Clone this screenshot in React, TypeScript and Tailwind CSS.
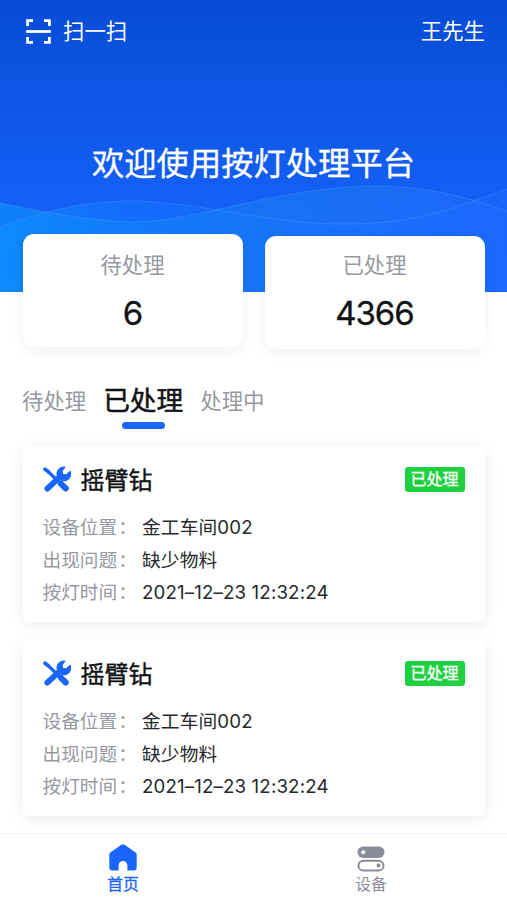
const stats = [
  { label: '待处理', value: '6', offset: 'mt-0', labelOffset: 'mt-[15px]' },
  { label: '已处理', value: '4366', offset: 'mt-0.5', labelOffset: 'mt-[13px]' },
];

const records = [
  { id: 1, name: '摇臂钻', status: '已处理', place: '金工车间002', problem: '缺少物料', time: '2021–12–23 12:32:24' },
  { id: 2, name: '摇臂钻', status: '已处理', place: '金工车间002', problem: '缺少物料', time: '2021–12–23 12:32:24' },
];

function ScanIcon() {
  return (
    <svg width="25" height="25" viewBox="0 0 25 25" fill="none" stroke="#fff" strokeWidth="2.8">
      <path d="M1.6 7V1.600H7M18 1.600h5.400V7M23.400 18v5.400H18M7 23.400H1.600V18" />
      <path d="M.2 12.500h24.600" />
    </svg>
  );
}

function ToolsIcon() {
  return (
    <svg width="28" height="27" viewBox="0 0 28 27" fill="none" stroke="#1a66fb" strokeLinecap="round">
      <path d="M2 3.200 5.400 5.800" strokeWidth="3.600" />
      <path d="M5 5.500 17 17" strokeWidth="3.200" />
      <path d="M17.800 17.600l5 4.900" strokeWidth="6" />
      <path d="M4.300 22.700 17 10.800" strokeWidth="5.800" />
      <path d="M22.800.8a7.200 7.200 0 0 0-8.300 10.500 7.200 7.200 0 0 0 12.900-6.700l-4.300 3.700-2.900-.4-.5-3z" fill="#1a66fb" stroke="none" />
    </svg>
  );
}

function HomeIcon() {
  return (
    <svg width="28" height="27" viewBox="0 0 28 27" fill="#1a66fb">
      <path d="M12.400.8a2.600 2.600 0 0 1 3.200 0L26.300 8.200c.9.7 1.400 1.500 1.400 2.600V23.600a3 3 0 0 1-3 3H18.400V21.300a4.400 4.400 0 0 0-8.800 0V26.600H3.300a3 3 0 0 1-3-3V10.800c0-1.100.5-1.900 1.400-2.600z" />
    </svg>
  );
}

function DeviceIcon() {
  return (
    <svg width="28" height="26" viewBox="0 0 28 26" fill="none">
      <rect x=".5" y=".5" width="27" height="11.500" rx="5.750" fill="#8a8d99" />
      <circle cx="6.200" cy="6.200" r="2" fill="#fff" />
      <rect x="1.500" y="14.800" width="25" height="9.700" rx="4.850" stroke="#8a8d99" strokeWidth="2" />
      <circle cx="21.500" cy="19.600" r="2" fill="#8a8d99" />
    </svg>
  );
}

function Waves() {
  return (
    <svg className="absolute inset-0" width="507" height="292" viewBox="0 0 507 292" fill="none">
      <defs>
        <linearGradient id="back" x1="0" y1="260" x2="507" y2="220" gradientUnits="userSpaceOnUse">
          <stop stopColor="#0c94f8" stopOpacity=".6" />
          <stop offset=".5" stopColor="#1a80f0" stopOpacity=".55" />
          <stop offset="1" stopColor="#2370fa" stopOpacity=".5" />
        </linearGradient>
        <linearGradient id="front" x1="0" y1="290" x2="507" y2="250" gradientUnits="userSpaceOnUse">
          <stop stopColor="#0c90ff" stopOpacity=".65" />
          <stop offset=".3" stopColor="#127cff" stopOpacity=".35" />
          <stop offset="1" stopColor="#1c68ff" stopOpacity=".6" />
        </linearGradient>
      </defs>
      <path d="M0 203C50 213 95 222 135 222C205 220 280 186 378 186C430 186 475 200 507 211V292H0Z" fill="url(#back)" />
      <path d="M0 227C40 213 80 201 130 201C200 201 260 224 345 224C420 224 460 206 507 189V292H0Z" fill="url(#front)" />
      <path d="M0 203C50 213 95 222 135 222C205 220 280 186 378 186C430 186 475 200 507 211" stroke="#5aa2ff" strokeOpacity=".3" />
      <path d="M0 227C40 213 80 201 130 201C200 201 260 224 345 224C420 224 460 206 507 189" stroke="#5aa2ff" strokeOpacity=".3" />
    </svg>
  );
}

function Row({ label, value }: { label: string; value: string }) {
  return (
    <div className="flex h-[32.5px] items-center text-[18.7px]">
      <span className="flex w-[99.5px] shrink-0 whitespace-nowrap text-[#96999f]">
        <span>{label}</span>
        <span className="ml-px [font-feature-settings:'halt']">：</span>
      </span>
      <span className="whitespace-nowrap tracking-[0.14px] text-[#26282b]">{value}</span>
    </div>
  );
}

export default function App() {
  return (
    <div className="flex h-[900px] w-[507px] flex-col overflow-hidden bg-white font-['Inter','Noto_Sans_CJK_SC',sans-serif]">
      <header className="relative h-[292px] shrink-0 bg-gradient-to-b from-[#084cd5] to-[#1562f8] to-75% text-white">
        <Waves />
        <div className="relative flex h-[62px] items-center pl-[26px] pr-[22px] text-[21.4px]">
          <ScanIcon />
          <span className="ml-3 mt-px">扫一扫</span>
          <span className="ml-auto mt-px">王先生</span>
        </div>
        <h1 className="relative mt-[78px] text-center text-[32.3px] leading-[48px] [-webkit-text-stroke:0.3px_white]">
          欢迎使用按灯处理平台
        </h1>
      </header>

      <section className="relative -mt-[58px] flex shrink-0 gap-[22px] px-[22.5px]">
        {stats.map((s) => (
          <div
            key={s.label}
            className={`flex h-[113px] flex-1 flex-col items-center rounded-[11px] bg-white shadow-[0_4px_14px_rgba(0,0,0,0.06)] ${s.offset}`}
          >
            <span className={`text-[21.4px] leading-8 text-[#96999f] ${s.labelOffset}`}>{s.label}</span>
            <span className="mt-3 text-[33px] leading-10 tracking-[-1px] text-[#111214] [-webkit-text-stroke:0.3px_#111214]">
              {s.value}
            </span>
          </div>
        ))}
      </section>

      <nav className="mt-[30px] flex h-[67px] shrink-0 items-start pl-[22px] text-[21.4px] leading-[44px] text-[#96999f]">
        <span>待处理</span>
        <span className="ml-[17px] flex flex-col items-center text-[26.7px] leading-[43px] text-[#111214] [-webkit-text-stroke:0.5px_#111214]">
          已处理
          <i className="block h-[7px] w-[43px] rounded-full bg-[#1a66fb]" />
        </span>
        <span className="ml-[17px]">处理中</span>
      </nav>

      <main className="flex min-h-0 flex-1 flex-col gap-[18px] px-[22.5px]">
        {records.map((r) => (
          <article key={r.id} className="h-[176px] shrink-0 rounded-[5px] bg-white px-5 shadow-[0_3px_16px_rgba(0,0,0,0.08)]">
            <div className="flex h-[66px] items-center">
              <ToolsIcon />
              <h2 className="ml-2.5 mt-[3px] text-[24px] leading-9 text-[#111214] [-webkit-text-stroke:0.4px_#111214]">{r.name}</h2>
              <span className="ml-auto flex h-[25px] w-[60px] items-center justify-center rounded-[3px] bg-[#1fd140] text-[16px] text-white [-webkit-text-stroke:0.3px_white]">
                {r.status}
              </span>
            </div>
            <Row label="设备位置" value={r.place} />
            <Row label="出现问题" value={r.problem} />
            <Row label="按灯时间" value={r.time} />
          </article>
        ))}
      </main>

      <footer className="relative flex h-[67px] shrink-0 border-t border-[#f0f0f0] bg-white text-[15.8px] leading-6">
        <a className="ml-[-1px] flex w-[248px] flex-col items-center gap-0.5 pt-2.5 text-[#1a66fb] [-webkit-text-stroke:0.3px_#1a66fb]">
          <HomeIcon />
          <span>首页</span>
        </a>
        <a className="flex w-[248px] flex-col items-center gap-px pt-3 text-[#8a8d99]">
          <DeviceIcon />
          <span>设备</span>
        </a>
      </footer>
    </div>
  );
}
